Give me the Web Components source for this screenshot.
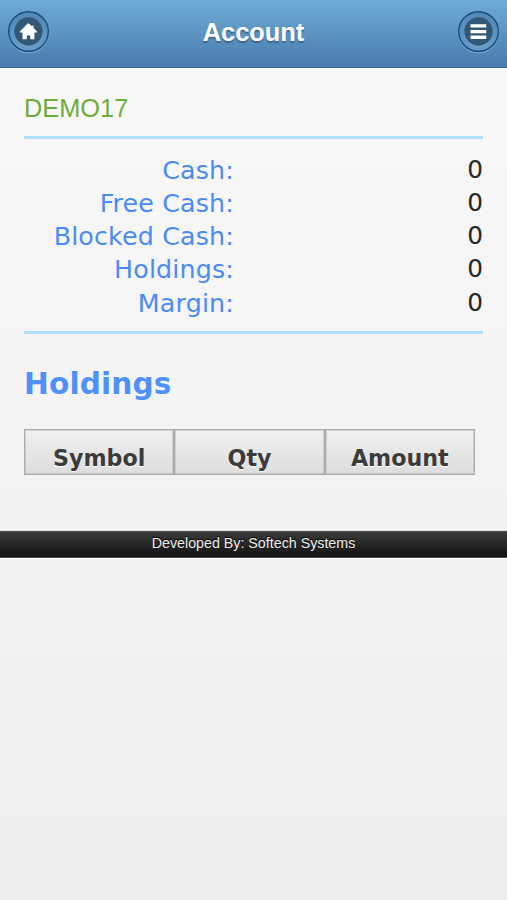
<!DOCTYPE HTML><html lang="en">
<head><meta charset="utf-8">
<title>Account</title>
<style>
  html { min-height: 100%; background: #eee; }
  body {
    margin: 0; min-height: 900px; color: #333;
    font: 25.35px/33.25px "DejaVu Sans", sans-serif;
    background: linear-gradient(#f9f9f9, #eee);
  }
</style>

<template id="app-header-template">
  <style>
    :host {
      display: flex; align-items: center; justify-content: space-between;
      box-sizing: border-box; height: 68px; padding: 0 8px 4px;
      background: linear-gradient(#6facd5, #497bae);
      border-bottom: 1px solid #3d6792;
      box-shadow: 0 1px 1px #fff;
    }
    h1 {
      margin: 0; color: #fff; text-shadow: 0 2px 1px #3e6790;
      font: bold 25.35px/34px "Liberation Sans", sans-serif;
    }
  </style>
  <slot name="left"></slot>
  <h1><slot></slot></h1>
  <slot name="right"></slot>
</template>

<template id="round-button-template">
  <style>
    :host { display: block; width: 41px; height: 41px; }
    svg { display: block; overflow: visible; }
    .glyph { display: none; fill: #fff; }
    :host([icon="home"]) .home, :host([icon="bars"]) .bars { display: block; }
  </style>
  <svg width="41" height="41" viewBox="0 0 41 41">
    <defs>
      <linearGradient id="ring" x2="0" y2="1">
        <stop stop-color="#5187b8"/><stop offset="1" stop-color="#669dcc"/>
      </linearGradient>
    </defs>
    <circle cx="20.5" cy="21.8" r="20" fill="none" stroke="#8bb9dc" stroke-opacity=".75"/>
    <circle cx="20.5" cy="20.5" r="19.8" fill="url(#ring)" stroke="#124d7b" stroke-width="1.4"/>
    <circle cx="20.5" cy="21.2" r="14.3" fill="#8aaecb" fill-opacity=".75"/>
    <circle cx="20.5" cy="20.5" r="14.2" fill="#335875"/>
    <path class="glyph home" d="M19.7 12.6h1.2l3 2.7v-.5h1.7v2.1l3.4 3.5v1h-2.6v6.9h-4.2v-3.7h-3.4v3.7h-4.3v-6.9h-2.6v-1z"/>
    <path class="glyph bars" d="M12.5 13.3h15.7v3.3H12.5zm0 5.7h15.7v3.3H12.5zm0 5.6h15.7v3.3H12.5z"/>
  </svg>
</template>

<template id="account-summary-template">
  <style>
    :host { display: block; }
    .user {
      height: 68px; box-sizing: border-box; padding-top: 24px; color: #6fac3e;
      font: 25.35px/32px "Liberation Sans", sans-serif;
    }
    .rows { border: solid #ade1fb; border-width: 3px 0; padding: 14.5px 0 11px; }
  </style>
  <div class="user"><slot name="user"></slot></div>
  <div class="rows"><slot></slot></div>
</template>

<template id="balance-row-template">
  <style>
    :host { display: flex; justify-content: space-between; height: 33.3px; }
    .label { width: 210px; text-align: right; color: #4b8bf5; white-space: nowrap; letter-spacing: .15px; }
    .value { color: #282828; margin-top: -1px; font-size: 24.8px; }
  </style>
  <span class="label"><slot name="label"></slot></span>
  <span class="value"><slot></slot></span>
</template>

<template id="holdings-table-template">
  <style>
    :host { display: block; }
    h3 { margin: 31px 0 26px; color: #4f90fb; font-size: 29.6px; line-height: 38px; letter-spacing: .15px; }
    .head { display: flex; width: 451px; }
  </style>
  <h3><slot name="title"></slot></h3>
  <div class="head"><slot></slot></div>
</template>

<template id="table-heading-template">
  <style>
    :host {
      display: block; flex: 1; box-sizing: border-box; height: 46px; padding-top: 11px;
      border: 1px solid #ababab; box-shadow: inset 0 0 0 1px rgba(171, 171, 171, .4);
      background: linear-gradient(#f0f0f0, #ddd);
      color: #3b3b3b; text-align: center; text-shadow: 0 1px 1px #fff;
      font-weight: bold; font-size: 22.2px; line-height: 34px;
    }
  </style>
  <slot></slot>
</template>

<template id="app-footer-template">
  <style>
    :host {
      display: block; box-sizing: border-box; height: 27px; margin-top: 56px;
      background: linear-gradient(#3b3b3b, #121212);
      border: solid #4b4b4b; border-width: 1px 0; box-shadow: 0 1px #fff, 0 -1px #e1e1e1;
      color: #eee; text-align: center; text-shadow: 0 -1px 1px #000;
      font: 14.25px/23px "Liberation Sans", sans-serif;
    }
  </style>
  <slot></slot>
</template>

<style>
  main { display: block; padding: 0 24px; }
</style>
</head><body>

<app-header>
  <round-button slot="left" icon="home" aria-label="Home"></round-button>
  Account
  <round-button slot="right" icon="bars" aria-label="Menu"></round-button>
</app-header>

<main>
  <account-summary>
    <span slot="user">DEMO17</span>
    <balance-row><span slot="label">Cash:</span>0</balance-row>
    <balance-row><span slot="label">Free Cash:</span>0</balance-row>
    <balance-row><span slot="label">Blocked Cash:</span>0</balance-row>
    <balance-row><span slot="label">Holdings:</span>0</balance-row>
    <balance-row><span slot="label">Margin:</span>0</balance-row>
  </account-summary>

  <holdings-table>
    <span slot="title">Holdings</span>
    <table-heading>Symbol</table-heading>
    <table-heading>Qty</table-heading>
    <table-heading>Amount</table-heading>
  </holdings-table>
</main>

<app-footer>Developed By: Softech Systems</app-footer>

<script>{
const names = [
    'app-header', 'round-button', 'account-summary', 'balance-row',
    'holdings-table', 'table-heading', 'app-footer'
]
for (const name of names) {
    customElements.define(name,
        class extends HTMLElement {
            constructor() {
                super()
                const c = document.querySelector(`#${name}-template`).content
                this.attachShadow({ mode:'open' }).appendChild( c.cloneNode(true) )
            }
        }
    )
}
}</script>

</body></html>
